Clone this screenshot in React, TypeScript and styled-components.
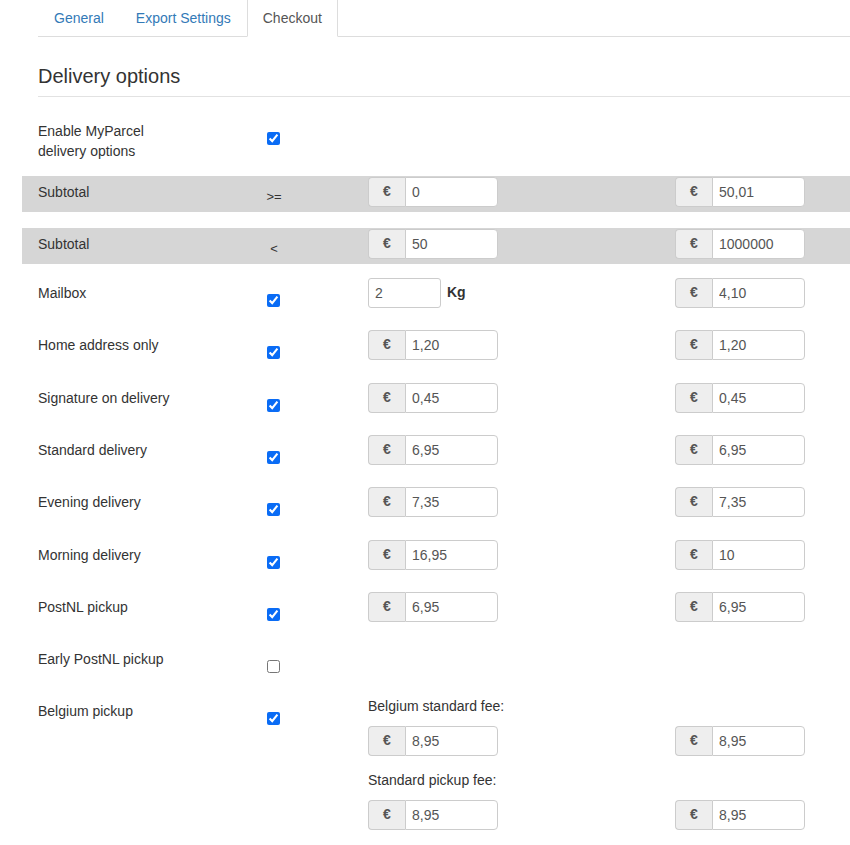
import React from "react";
import styled, { createGlobalStyle } from "styled-components";

type Price = string;

type OptionRow = {
  label: string;
  checked: boolean;
  prices?: [Price, Price];
};

const options: OptionRow[] = [
  { label: "Home address only", checked: true, prices: ["1,20", "1,20"] },
  { label: "Signature on delivery", checked: true, prices: ["0,45", "0,45"] },
  { label: "Standard delivery", checked: true, prices: ["6,95", "6,95"] },
  { label: "Evening delivery", checked: true, prices: ["7,35", "7,35"] },
  { label: "Morning delivery", checked: true, prices: ["16,95", "10"] },
  { label: "PostNL pickup", checked: true, prices: ["6,95", "6,95"] },
  { label: "Early PostNL pickup", checked: false },
];

const GlobalStyle = createGlobalStyle`
  html, body {
    margin: 0;
    padding: 0;
    background: #ffffff;
  }
  body {
    font-family: "Liberation Sans", Arial, Helvetica, sans-serif;
    font-size: 14px;
    line-height: 20px;
    color: #333333;
    overflow: hidden;
  }
`;

const Euro: React.FC<{ value: string }> = ({ value }) => (
  <InputGroup>
    <Addon>€</Addon>
    <GroupInput defaultValue={value} />
  </InputGroup>
);

const App: React.FC = () => {
  return (
    <>
      <GlobalStyle />
      <Page>
        <Tabs>
          <Tab>General</Tab>
          <Tab>Export Settings</Tab>
          <Tab $active>Checkout</Tab>
        </Tabs>

        <Heading>Delivery options</Heading>

        <Row $gap={10}>
          <Label $narrow>Enable MyParcel delivery options</Label>
          <CheckCell>
            <Check type="checkbox" defaultChecked />
          </CheckCell>
        </Row>

        <Row $shaded $gap={16}>
          <Label>Subtotal</Label>
          <Sign>&gt;=</Sign>
          <Euro value="0" />
          <Euro value="50,01" />
        </Row>

        <Row $shaded $gap={13}>
          <Label>Subtotal</Label>
          <Sign>&lt;</Sign>
          <Euro value="50" />
          <Euro value="1000000" />
        </Row>

        <Row>
          <Label>Mailbox</Label>
          <CheckCell>
            <Check type="checkbox" defaultChecked />
          </CheckCell>
          <Weight>
            <PlainInput defaultValue="2" />
            <Unit>Kg</Unit>
          </Weight>
          <Euro value="4,10" />
        </Row>

        {options.map((o) => (
          <Row key={o.label}>
            <Label>{o.label}</Label>
            <CheckCell>
              <Check type="checkbox" defaultChecked={o.checked} />
            </CheckCell>
            {o.prices && (
              <>
                <Euro value={o.prices[0]} />
                <Euro value={o.prices[1]} />
              </>
            )}
          </Row>
        ))}

        <Row>
          <Label>Belgium pickup</Label>
          <CheckCell>
            <Check type="checkbox" defaultChecked />
          </CheckCell>
          <FeeBlock>
            <FeeLabel>Belgium standard fee:</FeeLabel>
            <Euro value="8,95" />
            <Euro value="8,95" />
            <FeeLabel>Standard pickup fee:</FeeLabel>
            <Euro value="8,95" />
            <Euro value="8,95" />
          </FeeBlock>
        </Row>
      </Page>
    </>
  );
};

export default App;

const Page = styled("div")`
  padding-left: 22px;
  width: 828px;
`;

const Tabs = styled("ul")`
  display: flex;
  list-style: none;
  margin: 0 0 0 16px;
  padding: 0;
  border-bottom: 1px solid #dddddd;
`;

const Tab = styled("li")<{ $active?: boolean }>`
  padding: 8px 15px;
  margin-bottom: -1px;
  line-height: 20px;
  border: 1px solid transparent;
  border-top: 0;
  color: ${(p) => (p.$active ? "#555555" : "#337ab7")};
  background: ${(p) => (p.$active ? "#ffffff" : "transparent")};
  ${(p) =>
    p.$active &&
    `
    border-left-color: #dddddd;
    border-right-color: #dddddd;
  `}
`;

const Heading = styled("h2")`
  margin: 28px 0 18px 16px;
  padding-bottom: 9px;
  font-size: 20px;
  font-weight: 400;
  line-height: 22px;
  color: #333333;
  border-bottom: 1px solid #e2e2e2;
`;

const Row = styled("div")<{ $shaded?: boolean; $gap?: number }>`
  display: grid;
  grid-template-columns: 229px 101px 307px 130px 1fr;
  align-items: start;
  padding: 1px 0 5px 16px;
  margin-bottom: ${(p) => p.$gap ?? 16.33}px;
  background: ${(p) => (p.$shaded ? "#d6d6d6" : "transparent")};
`;

const Label = styled("div")<{ $narrow?: boolean }>`
  padding-top: 5px;
  line-height: 20px;
  max-width: ${(p) => (p.$narrow ? "150px" : "none")};
`;

const CheckCell = styled("div")`
  padding-top: 16px;
  display: flex;
`;

const Check = styled("input")`
  width: 13px;
  height: 13px;
  margin: 0;
  accent-color: #0a6cf5;
`;

const Sign = styled("div")`
  width: 16px;
  margin-left: -1px;
  padding-top: 10px;
  text-align: center;
  font-size: 13px;
  line-height: 20px;
`;

const InputGroup = styled("div")`
  display: flex;
  width: 130px;
  height: 30px;
  box-sizing: border-box;
`;

const Addon = styled("span")`
  display: flex;
  align-items: center;
  justify-content: center;
  width: 37px;
  box-sizing: border-box;
  background: #eeeeee;
  border: 1px solid #cccccc;
  border-right: 0;
  border-radius: 4px 0 0 4px;
  color: #555555;
  font-weight: 700;
  font-size: 14px;
  padding-bottom: 2px;
`;

const GroupInput = styled("input")`
  flex: 1;
  min-width: 0;
  box-sizing: border-box;
  height: 30px;
  margin: 0;
  padding: 0 6px;
  border: 1px solid #cccccc;
  border-radius: 0 4px 4px 0;
  background: #ffffff;
  color: #555555;
  font-family: inherit;
  font-size: 14px;
  outline: none;
`;

const Weight = styled("div")`
  display: flex;
  align-items: flex-start;
  gap: 6px;
`;

const PlainInput = styled("input")`
  width: 73px;
  height: 30px;
  box-sizing: border-box;
  margin: 0;
  padding: 0 6px;
  border: 1px solid #cccccc;
  border-radius: 3px;
  color: #555555;
  font-family: inherit;
  font-size: 14px;
  outline: none;
`;

const Unit = styled("span")`
  font-weight: 700;
  line-height: 20px;
  padding-top: 4px;
`;

const FeeBlock = styled("div")`
  grid-column: 3 / 5;
  display: grid;
  grid-template-columns: 307px 130px;
  grid-template-rows: 20px 30px 24px 30px;
  row-gap: 10px;
`;

const FeeLabel = styled("div")`
  grid-column: 1 / 3;
  align-self: end;
  font-size: 14px;
  line-height: 20px;
`;
